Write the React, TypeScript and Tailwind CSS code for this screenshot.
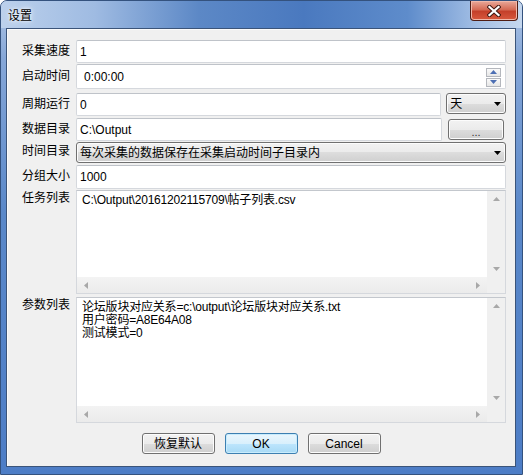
const font = "[font-family:'Liberation_Sans','Noto_Sans_CJK_SC',sans-serif]";
const btnBg =
  "bg-[linear-gradient(180deg,#f2f2f2_0%,#ebebeb_50%,#dddddd_50%,#cfcfcf_100%)] border border-[#707070] rounded-[3px] shadow-[inset_0_0_0_1px_#fcfcfc]";

function DownArrow() {
  return (
    <svg width="7" height="4" viewBox="0 0 7 4">
      <path d="M0 0H7L3.5 4Z" fill="#000" />
    </svg>
  );
}

function Label({ text, className = "" }: { text: string; className?: string }) {
  return <div className={`w-[48px] shrink-0 text-[12px] text-black ${className}`}>{text}</div>;
}

function Box({ children, className = "" }: { children?: React.ReactNode; className?: string }) {
  return (
    <div
      className={`bg-white border border-[#d5d8dd] border-t-[#bfc3c9] rounded-[2px] flex items-center text-[12px] text-black ${className}`}
    >
      {children}
    </div>
  );
}

function Combo({ text, className = "" }: { text: string; className?: string }) {
  return (
    <div className={`${btnBg} h-[21px] flex items-center justify-between pl-[3px] pr-[4px] text-[12px] text-black ${className}`}>
      <span>{text}</span>
      <DownArrow />
    </div>
  );
}

function Memo({ lines }: { lines: string[] }) {
  return (
    <div className="flex-1 border border-[#d5d8dd] border-t-[#c3c7cd] bg-white grid grid-cols-[1fr_18px] grid-rows-[1fr_16px]">
      <div className="pl-[5px] pt-[3px] text-[12px] leading-[13px] text-black tracking-[-0.2px]">
        {lines.map((l) => (
          <div key={l}>{l}</div>
        ))}
      </div>
      <div className="bg-[#f0f0f0] flex flex-col items-center justify-between py-[6px]">
        <svg width="7" height="4" viewBox="0 0 7 4">
          <path d="M0 4H7L3.5 0Z" fill="#a8a8a8" />
        </svg>
        <svg width="7" height="4" viewBox="0 0 7 4">
          <path d="M0 0H7L3.5 4Z" fill="#a8a8a8" />
        </svg>
      </div>
      <div className="bg-[linear-gradient(180deg,#f3f3f3,#ebebeb)] flex items-center justify-between px-[7px]">
        <svg width="4" height="7" viewBox="0 0 4 7">
          <path d="M4 0V7L0 3.5Z" fill="#a8a8a8" />
        </svg>
        <svg width="4" height="7" viewBox="0 0 4 7">
          <path d="M0 0V7L4 3.5Z" fill="#a8a8a8" />
        </svg>
      </div>
      <div className="bg-[#f0f0f0]" />
    </div>
  );
}

function SpinBtn({ up }: { up?: boolean }) {
  return (
    <div className="w-[15px] h-[9px] border border-[#b4b7bd] bg-[linear-gradient(180deg,#fafafa,#e6e6e6)] flex items-center justify-center">
      <svg width="7" height="4" viewBox="0 0 7 4">
        <path d={up ? "M0 4H7L3.5 0Z" : "M0 0H7L3.5 4Z"} fill="#4d6fb3" />
      </svg>
    </div>
  );
}

function Button({ text, primary }: { text: string; primary?: boolean }) {
  const cls = primary
    ? "bg-[linear-gradient(180deg,#eaf6fd_0%,#d9f0fc_50%,#bee6fd_50%,#a7d9f5_100%)] border border-[#3c7fb1] rounded-[3px] shadow-[inset_0_0_0_1px_#c8ecfd]"
    : btnBg;
  return (
    <div className={`${cls} w-[73px] h-[21px] flex items-center justify-center text-[12px] text-black`}>{text}</div>
  );
}

export default function App() {
  return (
    <div
      className={`${font} w-[523px] h-[475px] border border-[#34527e] rounded-t-[7px] flex flex-col bg-[linear-gradient(180deg,#b2c8e6_0%,#86a7d8_12%,#5a88c9_45%,#4d7dc6_100%)]`}
    >
      {/* title bar */}
      <div className="h-[27px] flex items-start justify-between bg-[linear-gradient(90deg,#bcd1ec_0%,#9fbbe2_18%,#5c88c6_38%,#4a79bf_58%,#5e8ccb_78%,#a6c1e6_92%,#c6d8ef_100%)] rounded-t-[6px]">
        <div className="pl-[7px] pt-[6px] text-[12px] text-black [text-shadow:0_0_6px_#fff,0_0_3px_#fff]">设置</div>
        <div className="mr-[4px] w-[48px] h-[20px] rounded-b-[4px] border border-t-0 border-[#4f1d14] bg-[linear-gradient(180deg,#e9a99a_0%,#d56b55_45%,#c4402a_55%,#d8593e_100%)] shadow-[inset_0_0_0_1px_#f0b8aa] flex items-center justify-center">
          <svg width="14" height="12" viewBox="0 0 14 12">
            <path d="M2.5 2L11.5 10M11.5 2L2.5 10" stroke="#3d1610" strokeWidth="4.2" strokeLinecap="square" />
            <path d="M2.5 2L11.5 10M11.5 2L2.5 10" stroke="#fff" strokeWidth="2.3" strokeLinecap="square" />
          </svg>
        </div>
      </div>

      {/* client area */}
      <div className="ml-[5px] w-[510px] h-[439px] border border-[#3b5479] bg-[#f0f0f0] shadow-[inset_1px_1px_0_#fbfbfb] flex flex-col pl-[15px] pr-[9px]">
        <div className="mt-[11px] flex items-center gap-[6px]">
          <Label text="采集速度" className="pb-[2px]" />
          <Box className="flex-1 h-[23px] pl-[3px]">1</Box>
        </div>

        <div className="mt-[1px] flex items-center gap-[6px]">
          <Label text="启动时间" className="pb-[2px]" />
          <Box className="flex-1 h-[25px] pl-[7px] justify-between pr-[4px]">
            <span>0:00:00</span>
            <div className="flex flex-col gap-[1px] pt-[1px]">
              <SpinBtn up />
              <SpinBtn />
            </div>
          </Box>
        </div>

        <div className="mt-[4px] flex items-center gap-[6px]">
          <Label text="周期运行" className="pb-[2px]" />
          <Box className="w-[366px] h-[23px] pl-[3px]">0</Box>
          <Combo text="天" className="ml-[-1px] w-[60px] self-start" />
        </div>

        <div className="mt-[2px] flex items-center gap-[6px]">
          <Label text="数据目录" className="pb-[2px]" />
          <Box className="w-[366px] h-[23px] pl-[3px]">C:\Output</Box>
          <div className={`${btnBg} w-[56px] h-[21px] flex items-end justify-center pb-[1px] text-[11px] leading-[12px] text-[#333]`}>
            ...
          </div>
        </div>

        <div className="mt-[1px] flex items-center gap-[6px]">
          <Label text="时间目录" className="pb-[3px]" />
          <Combo text="每次采集的数据保存在采集启动时间子目录内" className="flex-1" />
        </div>

        <div className="mt-[2px] flex items-center gap-[6px]">
          <Label text="分组大小" className="pb-[3px]" />
          <Box className="flex-1 h-[24px] pl-[3px]">1000</Box>
        </div>

        <div className="mt-[1px] h-[104px] flex items-stretch gap-[6px]">
          <Label text="任务列表" className="pt-[1px] leading-[14px]" />
          <Memo lines={["C:\\Output\\20161202115709\\帖子列表.csv"]} />
        </div>

        <div className="mt-[3px] h-[126px] flex items-stretch gap-[6px]">
          <Label text="参数列表" className="pt-[1px] leading-[14px]" />
          <Memo lines={["论坛版块对应关系=c:\\output\\论坛版块对应关系.txt", "用户密码=A8E64A08", "测试模式=0"]} />
        </div>

        <div className="mt-[10px] flex justify-center gap-[10px] -ml-[15px] -mr-[9px]">
          <Button text="恢复默认" />
          <Button text="OK" primary />
          <Button text="Cancel" />
        </div>
      </div>
    </div>
  );
}
